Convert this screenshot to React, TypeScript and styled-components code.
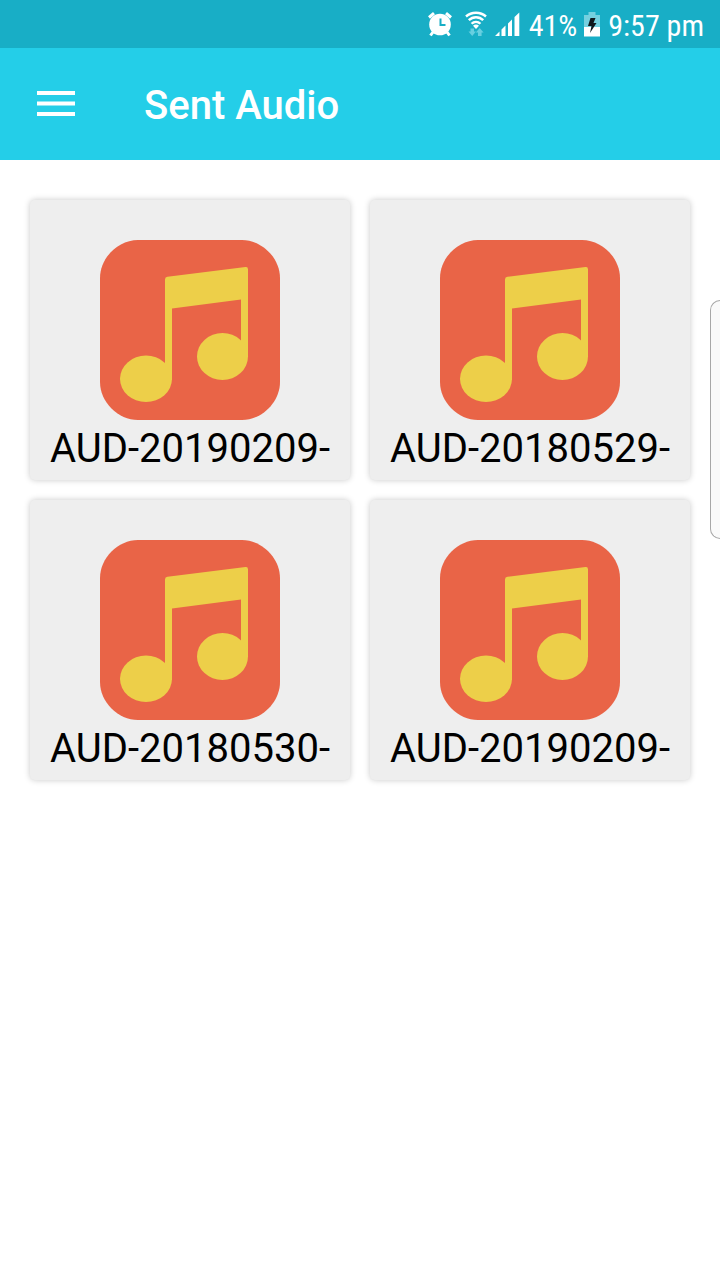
import React from "react";
import styled, { createGlobalStyle } from "styled-components";

const GlobalStyle = createGlobalStyle`
  *, *::before, *::after { box-sizing: border-box; }
  body {
    margin: 0;
    background: #ffffff;
    font-family: Roboto, "Liberation Sans", sans-serif;
  }
`;

const Screen = styled.div`
  position: relative;
  min-height: 100vh;
  overflow: hidden;
`;

const StatusBar = styled.div`
  display: flex;
  align-items: center;
  justify-content: flex-end;
  height: 48px;
  padding: 0 16px;
  background: #18aec6;
  color: #ffffff;
  svg { display: block; flex: none; }
`;

const StatusText = styled.span<{ $gap: number }>`
  margin-left: ${(p) => p.$gap}px;
  font-family: "Roboto Condensed", Roboto, "Liberation Sans", sans-serif;
  font-size: 30px;
  line-height: 48px;
  white-space: nowrap;
  padding-top: 4px;
`;

const StatusIcon = styled.svg<{ $gap?: number }>`
  margin-left: ${(p) => p.$gap ?? 0}px;
`;

const AppBar = styled.header`
  display: flex;
  align-items: center;
  gap: 56px;
  height: 112px;
  padding: 0 24px;
  background: #24cee8;
  color: #ffffff;
`;

const MenuButton = styled.button`
  display: grid;
  place-items: center;
  width: 64px;
  height: 64px;
  padding: 0;
  border: 0;
  background: none;
  color: inherit;
  cursor: pointer;
`;

const Title = styled.h1`
  margin: 0;
  padding-top: 4px;
  font-size: 40px;
  font-weight: 500;
  line-height: 48px;
`;

const AudioGrid = styled.main`
  display: grid;
  grid-template-columns: repeat(2, minmax(0, 1fr));
  gap: 20px;
  padding: 40px 30px;
`;

const AudioCard = styled.button`
  display: flex;
  flex-direction: column;
  align-items: center;
  min-width: 0;
  padding: 40px 0 2px;
  border: 0;
  border-radius: 5px;
  background: #eeeeee;
  box-shadow: 0 0 6px rgba(0, 0, 0, 0.22);
  color: #000000;
  font-family: inherit;
  cursor: pointer;
`;

const AudioName = styled.span`
  max-width: 100%;
  overflow: hidden;
  font-size: 40px;
  line-height: 58px;
  white-space: nowrap;
`;

const EdgeHandle = styled.div`
  position: absolute;
  top: 300px;
  right: -1px;
  width: 11px;
  height: 239px;
  border: 1px solid #a8a8a8;
  border-right: 0;
  border-radius: 10px 0 0 10px;
  background: #fafafa;
`;

const AlarmIcon = () => (
  <StatusIcon width="26" height="26" viewBox="0 0 26 26" aria-label="Alarm set" role="img">
    <g stroke="#fff" strokeWidth="3" fill="none">
      <path d="M2 6.500 7 2.200M24 6.500 19 2.200" />
      <path d="M6 21 3.500 24.500M20 21l2.500 3.500" />
    </g>
    <circle cx="13" cy="13.500" r="10.800" fill="#fff" />
    <path d="M13.500 7.500v6.500h5" stroke="#18aec6" strokeWidth="2" fill="none" />
  </StatusIcon>
);

const WifiIcon = () => (
  <StatusIcon $gap={12} width="22" height="26" viewBox="0 0 22 26" aria-label="Wi-Fi" role="img">
    <g fill="none" stroke="#fff" strokeWidth="2.400">
      <path d="M1 5.500C6.500.4 15.500.4 21 5.500" />
      <path d="M3.800 9.200c4-4 10.400-4 14.400 0" />
      <path d="M6.600 12.800c2.400-2.600 6.400-2.600 8.800 0" />
    </g>
    <path d="m11 18-3-3.200c1.600-1.600 4.400-1.600 6 0Z" fill="#fff" />
    <path d="M5.500 17.500h3.500v3h2l-3.800 4.500L3.500 20.500h2ZM13 25v-3.500h-2.200L14.700 17l3.900 4.500h-2V25Z" fill="#67cfe0" />
  </StatusIcon>
);

const SignalIcon = () => (
  <StatusIcon $gap={8} width="25" height="24" viewBox="0 0 25 24" aria-label="Signal" role="img">
    <path
      d="M0 24 4.500 19.500V24ZM6.500 24v-6.500L10.500 13.500V24ZM13 24V11.500L17 7.500V24ZM19.500 24V5L24.300.5V24Z"
      fill="#fff"
    />
  </StatusIcon>
);

const BatteryIcon = () => (
  <StatusIcon $gap={7} width="16" height="25" viewBox="0 0 16 25" aria-label="Charging" role="img">
    <path d="M4.500 0h7v3H16v12H0V3h4.500Z" fill="#74d0df" />
    <path d="M0 15h16v9.500H0Z" fill="#fff" />
    <path d="M6.500 6h5l-2 5H12.500L6 21 7.500 14H4Z" fill="#10181c" />
  </StatusIcon>
);

const MusicIcon = () => (
  <svg width="180" height="180" viewBox="0 0 180 180" aria-hidden="true">
    <path
      d="M38 0H142C162 0 180 18 180 38V142C180 162 162 180 142 180H38C18 180 0 162 0 142V38C0 18 18 0 38 0Z"
      fill="#e96447"
    />
    <g fill="#edcf49">
      <path d="M65 140V39.500Q65 37 67.500 36.700L145.500 27Q148 26.700 148 29.200V117H141V59.500L72 68.500V140Z" />
      <ellipse cx="46" cy="138.800" rx="26" ry="23.200" />
      <ellipse cx="122.500" cy="116.500" rx="25.500" ry="23.500" />
    </g>
  </svg>
);

const tracks = [
  { id: 1, name: "AUD-20190209-" },
  { id: 2, name: "AUD-20180529-" },
  { id: 3, name: "AUD-20180530-" },
  { id: 4, name: "AUD-20190209-" },
];

export default function App() {
  return (
    <Screen>
      <GlobalStyle />
      <StatusBar>
        <AlarmIcon />
        <WifiIcon />
        <SignalIcon />
        <StatusText $gap={9}>41%</StatusText>
        <BatteryIcon />
        <StatusText $gap={8}>9:57 pm</StatusText>
      </StatusBar>
      <AppBar>
        <MenuButton type="button" aria-label="Open menu">
          <svg width="38" height="26" viewBox="0 0 38 26" aria-hidden="true">
            <path d="M0 0h38v4H0ZM0 10.500h38v4H0ZM0 21h38v4H0Z" fill="currentColor" />
          </svg>
        </MenuButton>
        <Title>Sent Audio</Title>
      </AppBar>
      <AudioGrid>
        {tracks.map((track) => (
          <AudioCard key={track.id} type="button">
            <MusicIcon />
            <AudioName>{track.name}</AudioName>
          </AudioCard>
        ))}
      </AudioGrid>
      <EdgeHandle />
    </Screen>
  );
}
